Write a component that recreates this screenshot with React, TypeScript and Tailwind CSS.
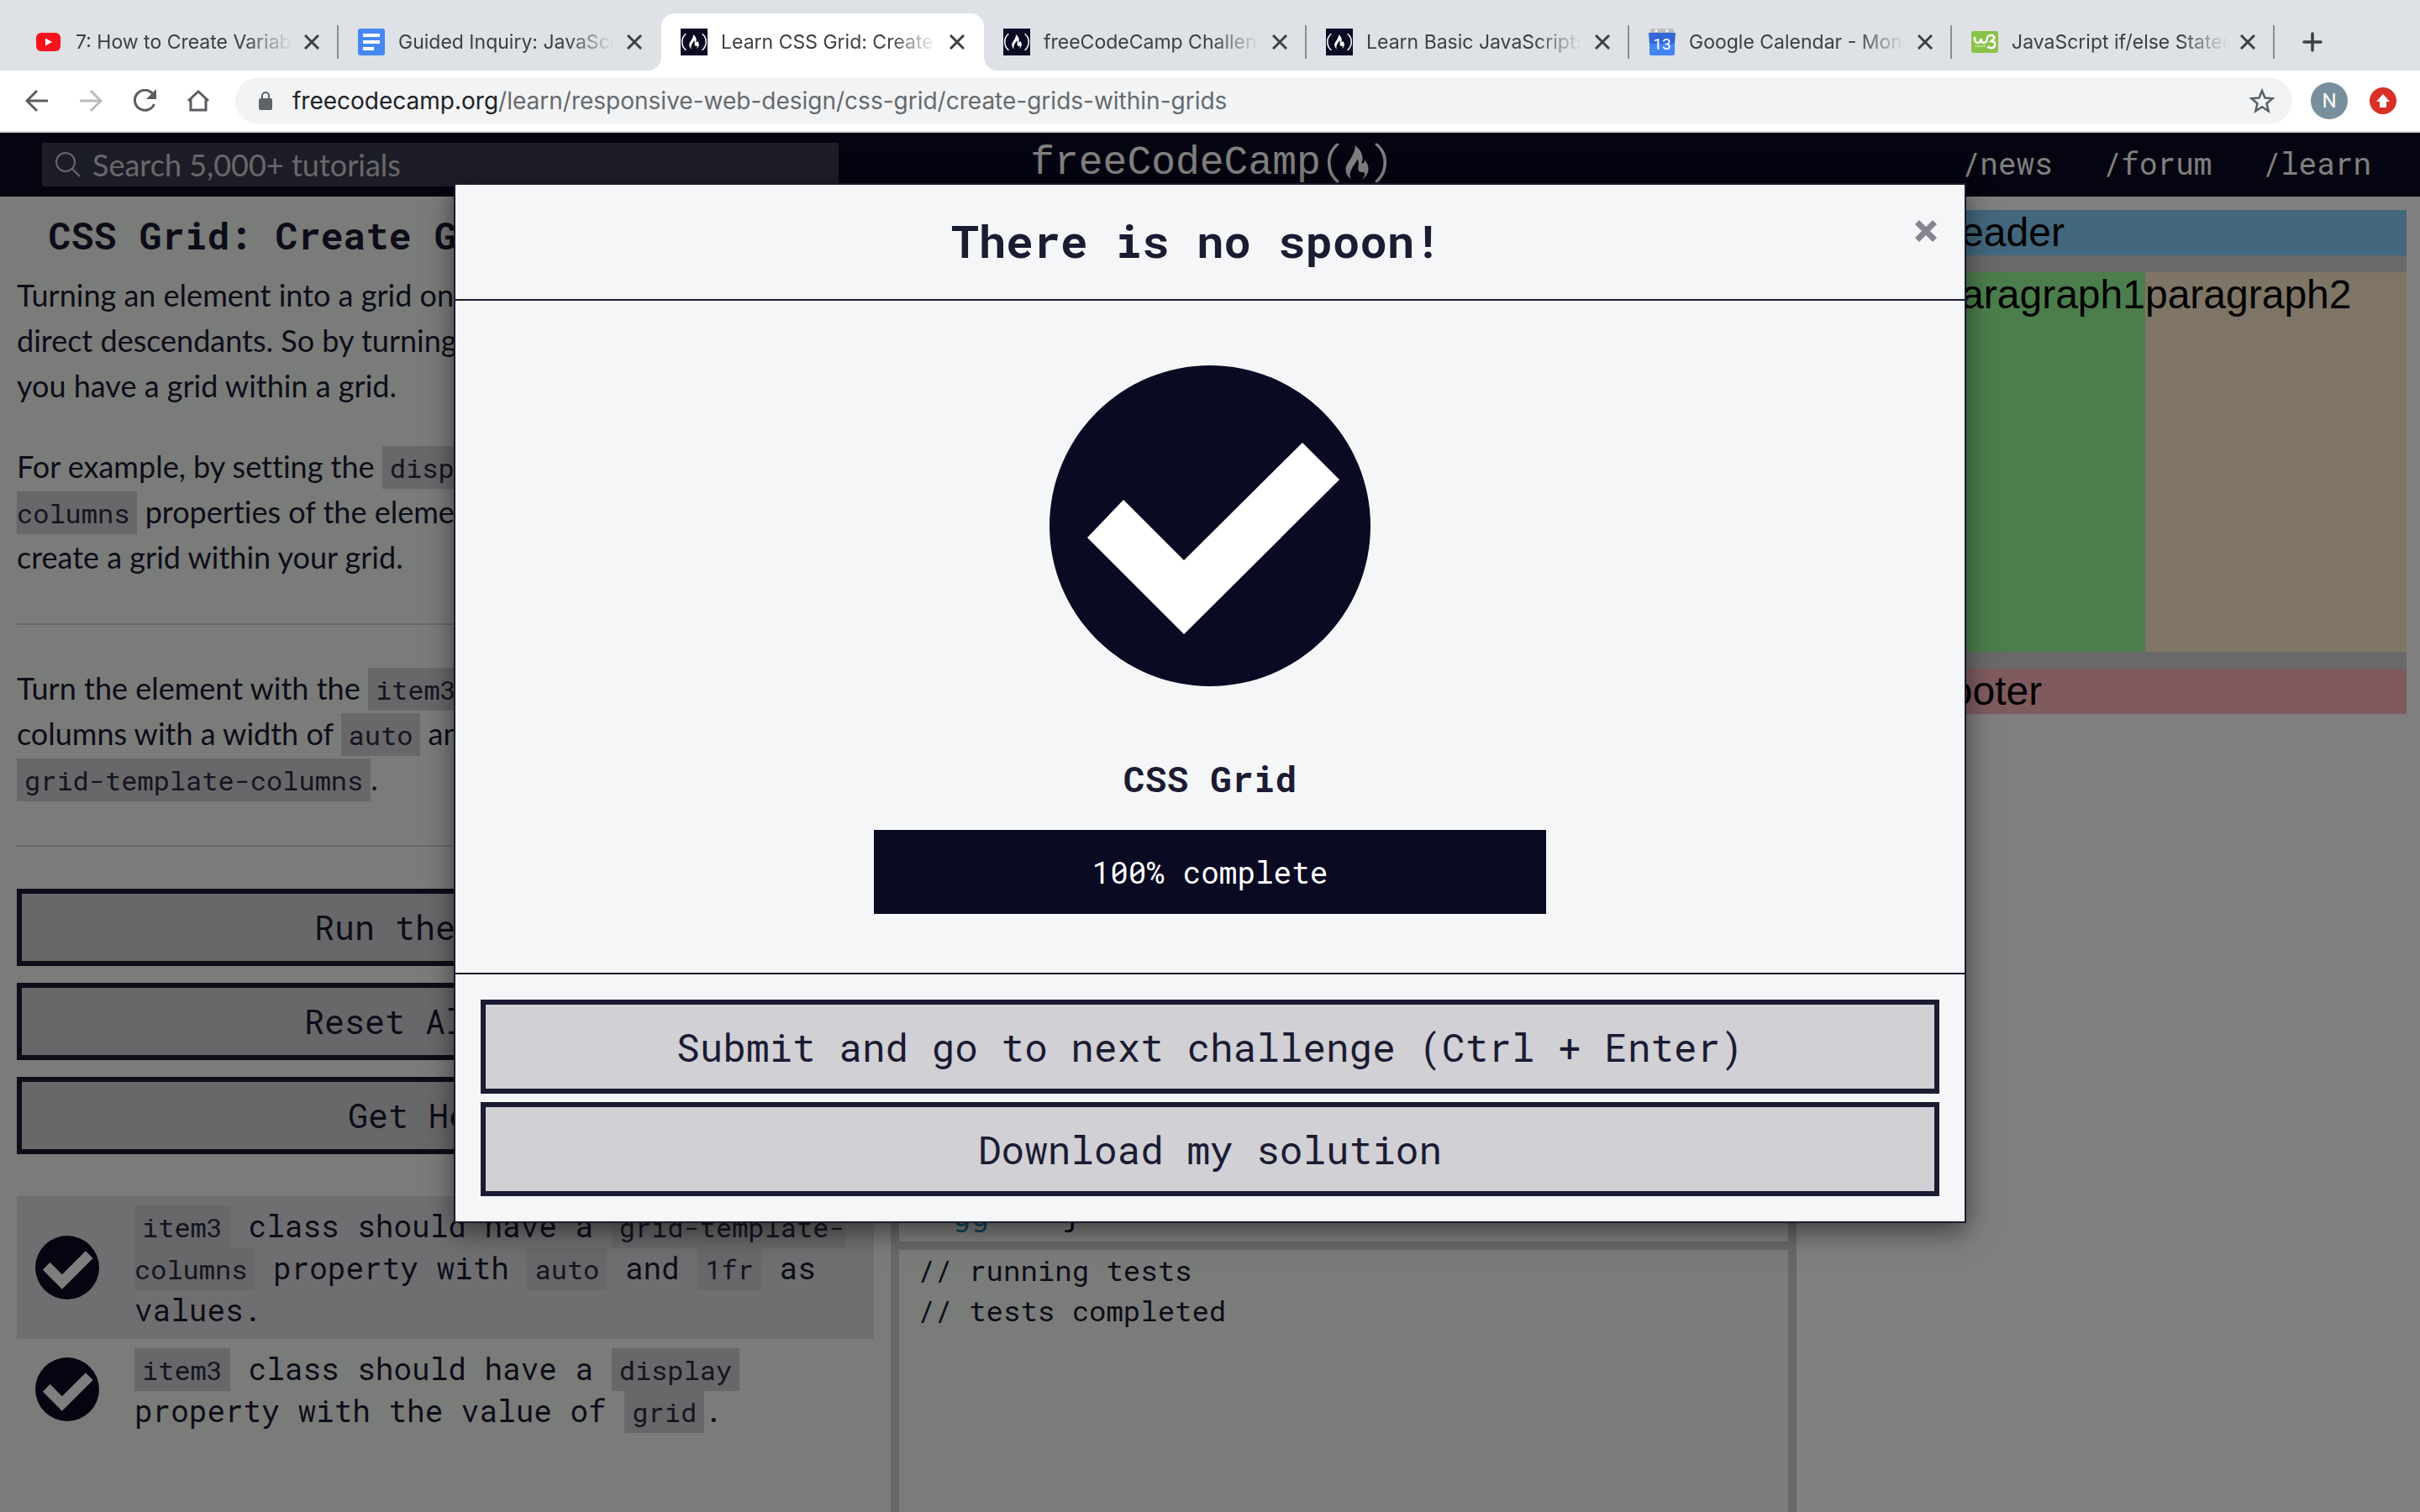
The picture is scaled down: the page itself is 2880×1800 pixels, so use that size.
import React from "react";
import { SiFreecodecamp } from "react-icons/si";

const mono = "font-['Roboto_Mono','DejaVu_Sans_Mono',monospace]";

function Code({ children }: { children: React.ReactNode }) {
  return (
    <code className="bg-[#d0d0d5] px-[9px] py-1 font-['Roboto_Mono','DejaVu_Sans_Mono',monospace] text-[32px] leading-none text-[#2a2a40]">
      {children}
    </code>
  );
}

function YoutubeIcon() {
  return (
    <svg viewBox="0 0 32 32" className="size-8">
      <rect x="1" y="5" width="29" height="22" rx="6" fill="#f8121d" />
      <path d="M12 11.500l8 4.500-8 4.500z" fill="#fff" />
    </svg>
  );
}

function DocsIcon() {
  return (
    <svg viewBox="0 0 32 32" className="size-8">
      <rect width="32" height="32" rx="3" fill="#4688f1" />
      <path d="M6 6h20v4H6zM6 14h20v4H6zM6 22h13v4H6z" fill="#fff" />
    </svg>
  );
}

function CampIcon() {
  return (
    <span className="flex size-8 items-center justify-center bg-[#0a0a23]">
      <SiFreecodecamp className="size-[30px] text-white" />
    </span>
  );
}

function CalendarIcon() {
  return (
    <svg viewBox="0 0 32 32" className="size-8">
      <rect x="2" y="0" width="28" height="8" rx="2" fill="#bdbdbd" />
      <circle cx="9" cy="2.500" r="1.500" fill="#fff" />
      <circle cx="22" cy="2.500" r="1.500" fill="#fff" />
      <path d="M0 5h32l-1 13H1z" fill="#3367d6" />
      <path d="M1 18h30v12a2 2 0 0 1-2 2H3a2 2 0 0 1-2-2z" fill="#4285f4" />
      <text x="16" y="25" textAnchor="middle" fontSize="19" fontFamily="Roboto, sans-serif" fill="#fff">
        13
      </text>
    </svg>
  );
}

function SchoolsIcon() {
  return (
    <svg viewBox="0 0 32 32" className="size-8">
      <rect y="3" width="32" height="26" rx="3" fill="#8bc34a" />
      <path
        d="M4 11q0 6 3.500 6T11.500 12q0 5 3.500 5t4-6"
        fill="none"
        stroke="#fff"
        strokeWidth="2.500"
        strokeLinecap="round"
      />
      <path
        d="M20 9q4-2 6.500 0t-2.500 6q5 0 4 5t-8 2"
        fill="none"
        stroke="#fff"
        strokeWidth="2.500"
        strokeLinecap="round"
      />
      <path d="M5 21h12" stroke="#fff" strokeWidth="1.500" strokeDasharray="1 1" />
    </svg>
  );
}

type Tab = { title: string; icon: React.ReactNode; active?: boolean; divider?: boolean };

const tabs: Tab[] = [
  { title: "7: How to Create Variables", icon: <YoutubeIcon />, divider: true },
  { title: "Guided Inquiry: JavaScript", icon: <DocsIcon /> },
  { title: "Learn CSS Grid: Create Grids", icon: <CampIcon />, active: true },
  { title: "freeCodeCamp Challenge", icon: <CampIcon />, divider: true },
  { title: "Learn Basic JavaScript: Use", icon: <CampIcon />, divider: true },
  { title: "Google Calendar - Monday", icon: <CalendarIcon />, divider: true },
  { title: "JavaScript if/else Statement", icon: <SchoolsIcon />, divider: true },
];

function TabStrip() {
  return (
    <div className="flex h-[84px] items-end bg-[#dee1e6] pl-[19px]">
      {tabs.map((tab) => (
        <div
          key={tab.title}
          className={
            tab.active
              ? "relative flex h-[68px] w-96 shrink-0 items-center rounded-t-2xl bg-white pl-[23px]"
              : "relative flex h-[68px] w-96 shrink-0 items-center pl-[23px]"
          }
        >
          {tab.active && (
            <>
              <span className="absolute bottom-0 -left-4 size-4 bg-white">
                <span className="block size-4 rounded-br-2xl bg-[#dee1e6]" />
              </span>
              <span className="absolute -right-4 bottom-0 size-4 bg-white">
                <span className="block size-4 rounded-bl-2xl bg-[#dee1e6]" />
              </span>
            </>
          )}
          {tab.icon}
          <span className="ml-4 w-[257px] overflow-hidden font-['Inter',sans-serif] text-[23px] whitespace-nowrap text-[#3c4043] [mask-image:linear-gradient(to_right,black_78%,transparent)]">
            {tab.title}
          </span>
          <button aria-label="Close tab" className="ml-[10px] flex size-7 items-center justify-center">
            <svg viewBox="0 0 18 18" className="size-[18px]" stroke="#3c4043" strokeWidth="3">
              <path d="M1 1l16 16M17 1L1 17" />
            </svg>
          </button>
          {tab.divider && <span className="absolute right-0 h-10 w-[2px] bg-[#8a8d91]" />}
        </div>
      ))}
      <button aria-label="New tab" className="flex h-[68px] w-[90px] items-center justify-center">
        <svg viewBox="0 0 24 24" className="size-6" stroke="#3c4043" strokeWidth="3.500" strokeLinecap="round">
          <path d="M12 2v20M2 12h20" />
        </svg>
      </button>
    </div>
  );
}

function Toolbar() {
  return (
    <div className="flex h-[74px] items-center border-b-2 border-[#d5d7db] bg-white pr-7 pl-3">
      <button aria-label="Back" className="flex w-16 justify-center">
        <svg viewBox="0 0 28 28" className="size-7" fill="none" stroke="#5a5d62" strokeWidth="3">
          <path d="M27 14H3M14 2L2 14l12 12" />
        </svg>
      </button>
      <button aria-label="Forward" className="flex w-16 justify-center">
        <svg viewBox="0 0 28 28" className="size-7" fill="none" stroke="#babcbe" strokeWidth="3">
          <path d="M1 14h24M14 2l12 12-12 12" />
        </svg>
      </button>
      <button aria-label="Reload" className="flex w-16 justify-center">
        <svg viewBox="0 0 28 28" className="size-7" fill="none" stroke="#5a5d62" strokeWidth="3">
          <path d="M24 6A12 12 0 1 0 25.500 18" />
          <path d="M28 0v12H16z" fill="#5a5d62" stroke="none" />
        </svg>
      </button>
      <button aria-label="Home" className="flex w-16 justify-center">
        <svg viewBox="0 0 28 28" className="size-7" fill="none" stroke="#5a5d62" strokeWidth="3">
          <path d="M2 14L14 3l12 11M5 12v13h18V12" />
        </svg>
      </button>
      <div className="ml-3 flex h-14 flex-1 items-center rounded-full bg-[#f1f3f4] pr-5 pl-7">
        <svg viewBox="0 0 16 22" className="h-[22px] w-4">
          <rect y="8" width="16" height="14" rx="2" fill="#5f6368" />
          <path d="M4 9V5a4 4 0 0 1 8 0v4" fill="none" stroke="#5f6368" strokeWidth="2" />
        </svg>
        <p className="ml-6 flex-1 font-['Inter',sans-serif] text-[28px] whitespace-nowrap text-[#66696d]">
          <span className="text-[#202124]">freecodecamp.org</span>
          /learn/responsive-web-design/css-grid/create-grids-within-grids
        </p>
        <button aria-label="Bookmark this page">
          <svg viewBox="0 0 32 32" className="size-8" fill="none" stroke="#5a5d62" strokeWidth="2.500">
            <path d="M16 4l3.500 8.500 9 .7-7 6 2.200 9L16 23.300l-7.700 4.900 2.200-9-7-6 9-.7z" />
          </svg>
        </button>
      </div>
      <button className="ml-[22px] size-11 rounded-full bg-[#78909c] font-['Roboto',sans-serif] text-[24px] text-white">
        N
      </button>
      <button aria-label="Update" className="ml-[26px] flex size-8 items-center justify-center rounded-full bg-[#d93025]">
        <svg viewBox="0 0 16 16" className="size-4" fill="#fff">
          <path d="M8 0l8 9h-4v7H4V9H0z" />
        </svg>
      </button>
    </div>
  );
}

function SiteHeader() {
  return (
    <header className="grid h-[76px] grid-cols-3 items-center bg-[#0a0a23] pr-[58px] pl-[50px]">
      <label className="flex h-[52px] w-[948px] items-center bg-[#3b3b4f] pl-4">
        <svg viewBox="0 0 30 30" className="size-[30px]" fill="none" stroke="#d0d0d5" strokeWidth="2">
          <circle cx="12" cy="12" r="11" />
          <path d="M20 20l9 9" />
        </svg>
        <input
          aria-label="Search"
          placeholder="Search 5,000+ tutorials"
          className="ml-[14px] flex-1 bg-transparent font-['Lato',sans-serif] text-[36px] leading-[52px] outline-none placeholder:text-[#d0d0d5]"
        />
      </label>
      <a href="#home" className="flex h-[52px] items-center justify-center gap-2 pb-1 pl-1 text-white">
        <span className="font-['Liberation_Mono',monospace] text-[48px] leading-[52px]">freeCodeCamp</span>
        <SiFreecodecamp className="size-[70px]" />
      </a>
      <nav className={`flex justify-end gap-[60px] pb-1 text-[36px] text-white ${mono}`}>
        <a href="#news">/news</a>
        <a href="#forum">/forum</a>
        <a href="#learn">/learn</a>
      </nav>
    </header>
  );
}

function CheckCircle({ className }: { className: string }) {
  return (
    <svg viewBox="0 0 382 382" className={className}>
      <circle cx="191" cy="191" r="191" fill="#0a0a23" />
      <path d="M88 160l72 72L301 92l44 44L160 320 45 205z" fill="#fff" />
    </svg>
  );
}

function Instructions() {
  const button =
    "h-[92px] w-full border-[6px] border-[#1b1b32] bg-[#d0d0d5] font-['Roboto_Mono','DejaVu_Sans_Mono',monospace] text-[40px]";
  return (
    <section className="w-[1060px] shrink-0 bg-[#f5f8f5] px-5 text-[#1b1b32]">
      <h1 className={`pt-[14px] text-center text-[45px] leading-[64px] font-bold whitespace-nowrap ${mono}`}>
        CSS Grid: Create Grids within Grids
      </h1>
      <div className="pt-3 font-['Lato',sans-serif] text-[36px] leading-[54px] [font-variant-ligatures:none]">
        <p className="mb-[42px]">
          Turning an element into a grid only affects the behavior of its
          <br />
          direct descendants. So by turning a direct descendant into a grid,
          <br />
          you have a grid within a grid.
        </p>
        <p>
          For example, by setting the <Code>display</Code> and <Code>grid-template-columns</Code> properties of the
          element with the <Code>item3</Code> class, you
          <br />
          create a grid within your grid.
        </p>
        <hr className="mt-[52px] mb-12 border-t-2 border-[#cfd1cf]" />
        <p>
          Turn the element with the <Code>item3</Code> class into a grid with two
          <br />
          columns with a width of <Code>auto</Code> and <Code>1fr</Code> using <Code>display</Code> and
          <br />
          <Code>grid-template-columns</Code>.
        </p>
        <hr className="mt-[52px] mb-[50px] border-t-2 border-[#cfd1cf]" />
      </div>
      <div className="flex flex-col gap-5">
        <button className={button}>Run the Tests</button>
        <button className={button}>Reset All Code</button>
        <button className={`flex items-center justify-center gap-5 ${button}`}>
          Get Help
          <svg viewBox="0 0 20 10" className="h-[10px] w-5" fill="#1b1b32">
            <path d="M0 0h20L10 10z" />
          </svg>
        </button>
      </div>
      <ul className={`mt-[50px] text-[36px] leading-[50px] ${mono}`}>
        <li className="flex items-center bg-[#dfdfe2] py-[10px] pl-[22px]">
          <CheckCircle className="size-[76px] shrink-0" />
          <p className="ml-[42px]">
            <Code>item3</Code> class should have a <Code>grid-template-columns</Code> property with <Code>auto</Code>{" "}
            and <Code>1fr</Code> as
            <br />
            values.
          </p>
        </li>
        <li className="flex items-center py-[10px] pl-[22px]">
          <CheckCircle className="size-[76px] shrink-0" />
          <p className="ml-[42px]">
            <Code>item3</Code> class should have a <Code>display</Code>
            <br />
            property with the value of <Code>grid</Code>.
          </p>
        </li>
      </ul>
    </section>
  );
}

function Editor() {
  return (
    <section className="flex flex-1 flex-col border-x-[10px] border-[#d0d0d5]">
      <div className="flex h-[1244px] flex-col justify-end bg-white pb-2 pl-16">
        <pre className="font-['DejaVu_Sans_Mono',monospace] text-[36px] leading-[44px] text-black">
          <span className="text-[#2b8fb8]">gg</span>
          {"    j"}
        </pre>
      </div>
      <pre
        className={`flex-1 border-t-[10px] border-[#d0d0d5] bg-[#f5f8f5] px-[22px] text-[34px] leading-[48px] text-[#1b1b32] ${mono}`}
      >
        {"// running tests\n// tests completed"}
      </pre>
    </section>
  );
}

function Preview() {
  return (
    <section className="w-[742px] shrink-0 bg-white p-4 font-['Liberation_Sans',sans-serif] text-[48px] leading-[54px] text-black">
      <div className="grid min-h-[600px] grid-cols-[auto_1fr] grid-rows-[auto_1fr_auto] gap-5 bg-[lightgray]">
        <div className="row-span-3 bg-[lightsalmon]">advert</div>
        <div className="bg-[lightskyblue]">header</div>
        <div className="grid grid-cols-[auto_1fr]">
          <div className="bg-[palegreen]">paragraph1</div>
          <div className="bg-[blanchedalmond]">paragraph2</div>
        </div>
        <div className="bg-[lightpink]">footer</div>
      </div>
    </section>
  );
}

function CompletionDialog() {
  const action = "h-28 w-full border-[6px] border-[#1b1b32] bg-[#d0d0d5] text-[46px]";
  return (
    <div
      role="dialog"
      aria-labelledby="dialog-title"
      className={`w-[1800px] border-2 border-[#1b1b32] bg-[#f5f6f8] text-[#1b1b32] shadow-[0_10px_30px_rgba(0,0,0,0.5)] ${mono}`}
    >
      <div className="flex h-[138px] items-start border-b-2 border-[#1b1b32] px-[30px] pt-8">
        <h2 id="dialog-title" className="flex-1 text-center text-[54px] leading-[68px] font-bold">
          There is no spoon!
        </h2>
        <button aria-label="Close" className="flex h-[46px] w-8 items-center justify-center">
          <svg viewBox="0 0 26 26" className="size-[26px]" stroke="#858591" strokeWidth="7">
            <path d="M2.500 2.500l21 21M23.500 2.500l-21 21" />
          </svg>
        </button>
      </div>
      <div className="flex flex-col items-center pt-[77px] pb-[70px]">
        <CheckCircle className="size-[382px]" />
        <h3 className="mt-20 text-[43px] leading-[60px] font-bold">CSS Grid</h3>
        <div className="mt-[31px] h-[100px] w-[800px] bg-[#0a0a23] text-center text-[36px] leading-[100px] text-white">
          100% complete
        </div>
      </div>
      <div className="flex flex-col gap-[10px] border-t-2 border-[#1b1b32] p-[30px]">
        <button className={action}>Submit and go to next challenge (Ctrl + Enter)</button>
        <button className={action}>Download my solution</button>
      </div>
    </div>
  );
}

export default function App() {
  return (
    <div className="flex h-screen flex-col overflow-hidden">
      <TabStrip />
      <Toolbar />
      <div className="relative flex flex-1 flex-col overflow-hidden">
        <SiteHeader />
        <main className="flex flex-1">
          <Instructions />
          <Editor />
          <Preview />
        </main>
        <div className="absolute inset-0 flex items-start justify-center bg-black/50 pt-[60px]">
          <CompletionDialog />
        </div>
      </div>
    </div>
  );
}
